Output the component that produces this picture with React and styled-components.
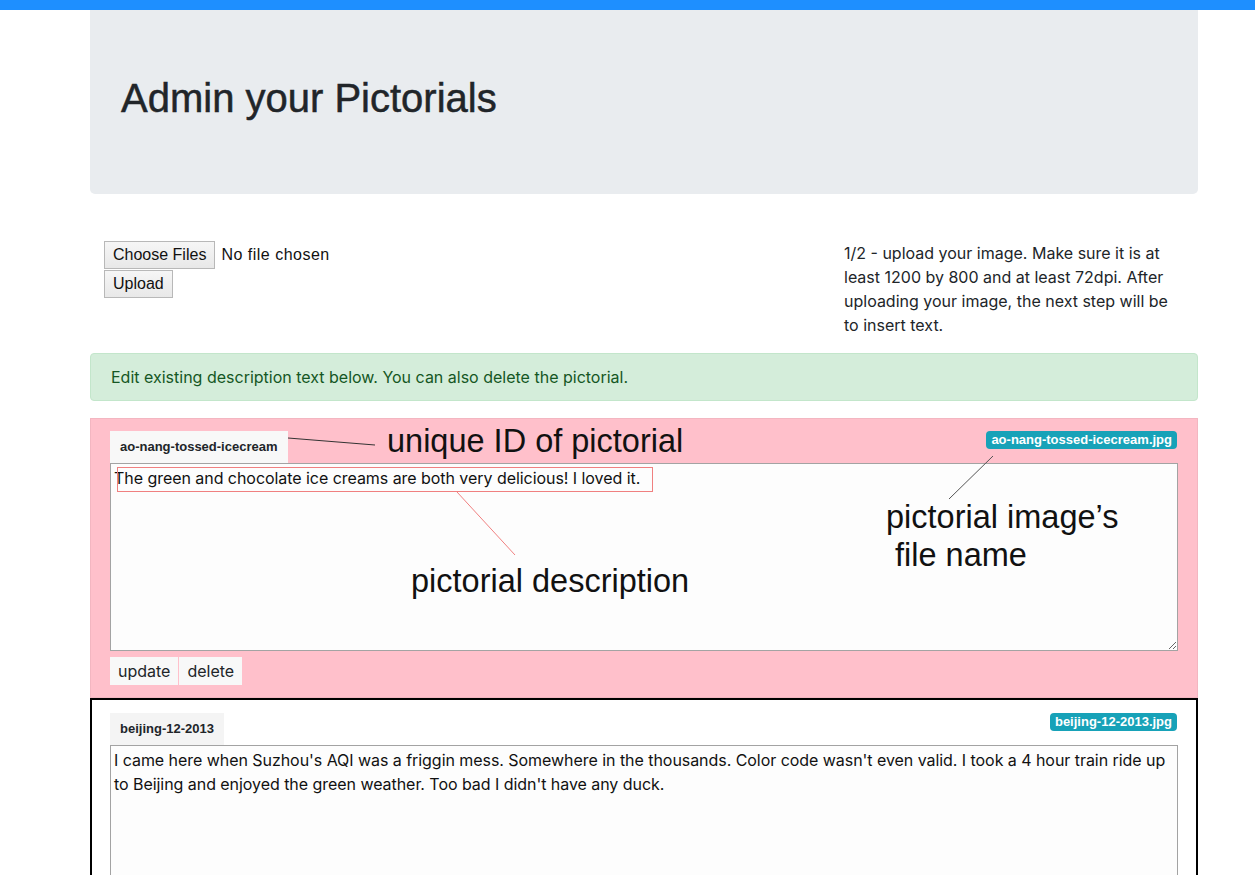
import React from 'react';
import styled, { createGlobalStyle } from 'styled-components';

const GlobalStyle = createGlobalStyle`
  body {
    margin: 0;
    background: #fff;
    font-family: Inter, "Liberation Sans", Arial, sans-serif;
    color: #212529;
  }
`;

const TopBar = styled.div`
  height: 10px;
  background: #1e8fff;
`;

const Container = styled.div`
  width: 1108px;
  margin-left: 90px;
`;

const Jumbotron = styled.div`
  background: #e9ecef;
  padding: 64px 31px;
  border-radius: 0 0 5px 5px;
  margin-bottom: 32px;
`;

const Heading = styled.h1`
  margin: 0 0 8px;
  font-family: "Liberation Sans", Arial, sans-serif;
  font-size: 40px;
  font-weight: 400;
  line-height: 1.2;
  color: #212529;
  -webkit-text-stroke: 0.5px #212529;
`;

const UploadRow = styled.div`
  display: grid;
  grid-template-columns: 739px 369px;
  padding: 15px 0 16px;
`;

const UploadForm = styled.div`
  display: flex;
  flex-direction: column;
  align-items: flex-start;
  gap: 1px;
  padding-left: 14px;
`;

const FileLine = styled.div`
  display: flex;
  align-items: center;
  gap: 6px;
  font-family: "Liberation Sans", Arial, sans-serif;
  font-size: 16px;
  letter-spacing: 0.5px;
  color: #111;
`;

const NativeButton = styled.button`
  height: 28px;
  padding: 0 8px;
  font: 16px "Liberation Sans", Arial, sans-serif;
  color: #111;
  background: linear-gradient(#f6f6f6, #e8e8e8);
  border: 1px solid #b8b8b8;
  border-radius: 0;
`;

const Hint = styled.p`
  margin: 0;
  padding: 0 15px;
  font-size: 16px;
  line-height: 24px;
  color: #212529;
`;

const Alert = styled.div`
  background: #d4edda;
  border: 1px solid #c3e6cb;
  border-radius: 4px;
  color: #155724;
  padding: 11px 20px;
  font-size: 16px;
  line-height: 24px;
  margin-bottom: 17px;
`;

const Card = styled.section`
  position: relative;
  background: ${(p) => (p.$active ? 'pink' : '#fff')};
  border: ${(p) => (p.$active ? '1px solid #f3b6c1' : '2px solid #000')};
  padding: ${(p) => (p.$active ? '12px 19px' : '13px 18px 12px')};
`;

const CardHeader = styled.div`
  display: flex;
  justify-content: space-between;
  align-items: flex-start;
`;

const IdTab = styled.div`
  background: ${(p) => (p.$active ? '#f8f8f8' : '#f4f4f4')};
  height: 32px;
  line-height: 32px;
  padding: 0 10px;
  font-family: "Liberation Sans", Arial, sans-serif;
  font-size: 13px;
  font-weight: 700;
  color: #212529;
`;

const Badge = styled.span`
  background: #17a2b8;
  color: #fff;
  font-family: "Liberation Sans", Arial, sans-serif;
  font-size: 13px;
  font-weight: 700;
  line-height: 13px;
  padding: 2px 5px 3px;
  margin-right: 1px;
  border-radius: 4px;
`;

const Description = styled.textarea`
  display: block;
  box-sizing: border-box;
  width: 100%;
  height: 188px;
  margin: 0;
  padding: 2px 3px;
  border: 1px solid #a3a3a3;
  background: #fdfdfd;
  font: 16px/24px Inter, "Liberation Sans", Arial, sans-serif;
  letter-spacing: -0.05px;
  color: #111;
  resize: vertical;
`;

const Actions = styled.div`
  display: flex;
  gap: 1px;
  margin-top: 6px;
`;

const ActionButton = styled.button`
  height: 28px;
  padding: 0 8px;
  border: none;
  background: #f8f8f8;
  font: 16px Inter, "Liberation Sans", Arial, sans-serif;
  color: #212529;
`;

const Overlay = styled.svg`
  position: absolute;
  left: 0;
  top: 0;
  width: 100%;
  height: 100%;
  pointer-events: none;
`;

const Label = styled.div`
  position: absolute;
  left: ${(p) => p.$x}px;
  top: ${(p) => p.$y}px;
  font-family: "Liberation Sans", Arial, sans-serif;
  font-size: 32.5px;
  line-height: ${(p) => (p.$lh ? p.$lh : 1)};
  color: #111;
  white-space: pre;
  pointer-events: none;
`;

const pictorials = [
  {
    id: 'ao-nang-tossed-icecream',
    file: 'ao-nang-tossed-icecream.jpg',
    text: 'The green and chocolate ice creams are both very delicious! I loved it.',
    active: true,
  },
  {
    id: 'beijing-12-2013',
    file: 'beijing-12-2013.jpg',
    text: "I came here when Suzhou's AQI was a friggin mess. Somewhere in the thousands. Color code wasn't even valid. I took a 4 hour train ride up to Beijing and enjoyed the green weather. Too bad I didn't have any duck.",
    active: false,
  },
];

const Annotations = () => (
  <>
    <Overlay>
      <line x1="197" y1="19" x2="284" y2="26" stroke="#333" strokeWidth="1" />
      <rect x="26.5" y="48.5" width="535" height="24" fill="none" stroke="#f08080" strokeWidth="1" />
      <line x1="366" y1="73" x2="424" y2="136" stroke="#f08080" strokeWidth="1" />
      <line x1="902" y1="37" x2="858" y2="80" stroke="#555" strokeWidth="1" />
    </Overlay>
    <Label $x={296} $y={6}>unique ID of pictorial</Label>
    <Label $x={320} $y={146}>pictorial description</Label>
    <Label $x={795} $y={79} $lh="38px">{'pictorial image’s\n file name'}</Label>
  </>
);

const App = () => {
  return (
    <>
      <GlobalStyle />
      <TopBar />
      <Container>
        <Jumbotron>
          <Heading>Admin your Pictorials</Heading>
        </Jumbotron>
        <UploadRow>
          <UploadForm>
            <FileLine>
              <NativeButton>Choose Files</NativeButton>
              <span>No file chosen</span>
            </FileLine>
            <NativeButton>Upload</NativeButton>
          </UploadForm>
          <Hint>
            1/2 - upload your image. Make sure it is at least 1200 by 800 and at
            least 72dpi. After uploading your image, the next step will be to
            insert text.
          </Hint>
        </UploadRow>
        <Alert>Edit existing description text below. You can also delete the pictorial.</Alert>
        {pictorials.map((p) => (
          <Card key={p.id} $active={p.active}>
            <CardHeader>
              <IdTab $active={p.active}>{p.id}</IdTab>
              <Badge>{p.file}</Badge>
            </CardHeader>
            <Description defaultValue={p.text} />
            <Actions>
              <ActionButton>update</ActionButton>
              <ActionButton>delete</ActionButton>
            </Actions>
            {p.active && <Annotations />}
          </Card>
        ))}
      </Container>
    </>
  );
};

export default App;
